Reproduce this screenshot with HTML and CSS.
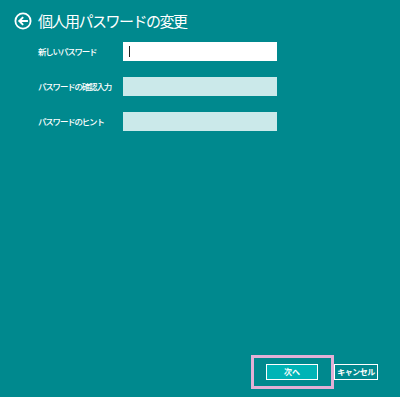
FILE: index.html
```html
<!DOCTYPE html>
<html lang="ja">
<head>
<meta charset="utf-8">
<link rel="stylesheet" href="styles.css">
</head>
<body>
<div class="page">
  <header class="header">
    <svg class="back" width="18" height="18" viewBox="0 0 18 18">
      <circle cx="9" cy="9" r="7.6" fill="none" stroke="#fff" stroke-width="1.8"/>
      <path d="M13 9 H5.5 M8.5 5.8 L5.3 9 L8.5 12.2" fill="none" stroke="#fff" stroke-width="1.9" stroke-linecap="square"/>
    </svg>
    <h1 class="title">個人用パスワードの変更</h1>
  </header>
  <main class="form">
    <label class="label">新しいパスワード</label>
    <div class="input active"><span class="caret"></span></div>
    <label class="label">パスワードの確認入力</label>
    <div class="input disabled"></div>
    <label class="label">パスワードのヒント</label>
    <div class="input disabled"></div>
  </main>
  <footer class="footer">
    <div class="focus"><button class="btn primary">次へ</button></div>
    <button class="btn secondary">キャンセル</button>
  </footer>
</div>
</body>
</html>
```
FILE: styles.css
```css
html, body {
  margin: 0;
  padding: 0;
}
body {
  background: #00898e;
  font-family: "Noto Sans CJK JP", "Noto Sans", sans-serif;
  color: #fff;
}
.page {
  height: 397px;
  display: flex;
  flex-direction: column;
}
.header {
  display: flex;
  align-items: center;
  gap: 6px;
  padding: 12px 0 0 14px;
  height: 18px;
}
.back {
  display: block;
}
.title {
  margin: 0;
  font-size: 15px;
  font-weight: 400;
  letter-spacing: -1.5px;
  line-height: 18px;
}
.form {
  display: grid;
  grid-template-columns: 85px 154px;
  row-gap: 16px;
  align-items: center;
  padding: 12px 0 0 38px;
}
.label {
  font-size: 8.5px;
  letter-spacing: -1.2px;
  line-height: 19px;
  font-weight: 500;
}
.input {
  height: 19px;
  box-sizing: border-box;
  display: flex;
  align-items: center;
}
.active {
  background: #fff;
  padding-left: 6px;
}
.caret {
  width: 1px;
  height: 11px;
  background: #222;
}
.disabled {
  background: #cbe9ea;
}
.footer {
  margin-top: auto;
  display: flex;
  align-items: center;
  padding: 0 22px 8px 0;
  justify-content: flex-end;
}
.focus {
  border: 3px solid #e3b0d6;
  padding: 6px 13px 6px 12px;
}
.btn {
  font-family: inherit;
  font-size: 8px;
  font-weight: 700;
  color: #fff;
  border: 1px solid #fff;
  height: 16px;
  line-height: 14px;
  padding: 0;
  margin: 0;
  display: block;
}
.primary {
  background: #00b4b6;
  width: 52px;
}
.secondary {
  background: #00898e;
  width: 44px;
  letter-spacing: -0.5px;
}
```
